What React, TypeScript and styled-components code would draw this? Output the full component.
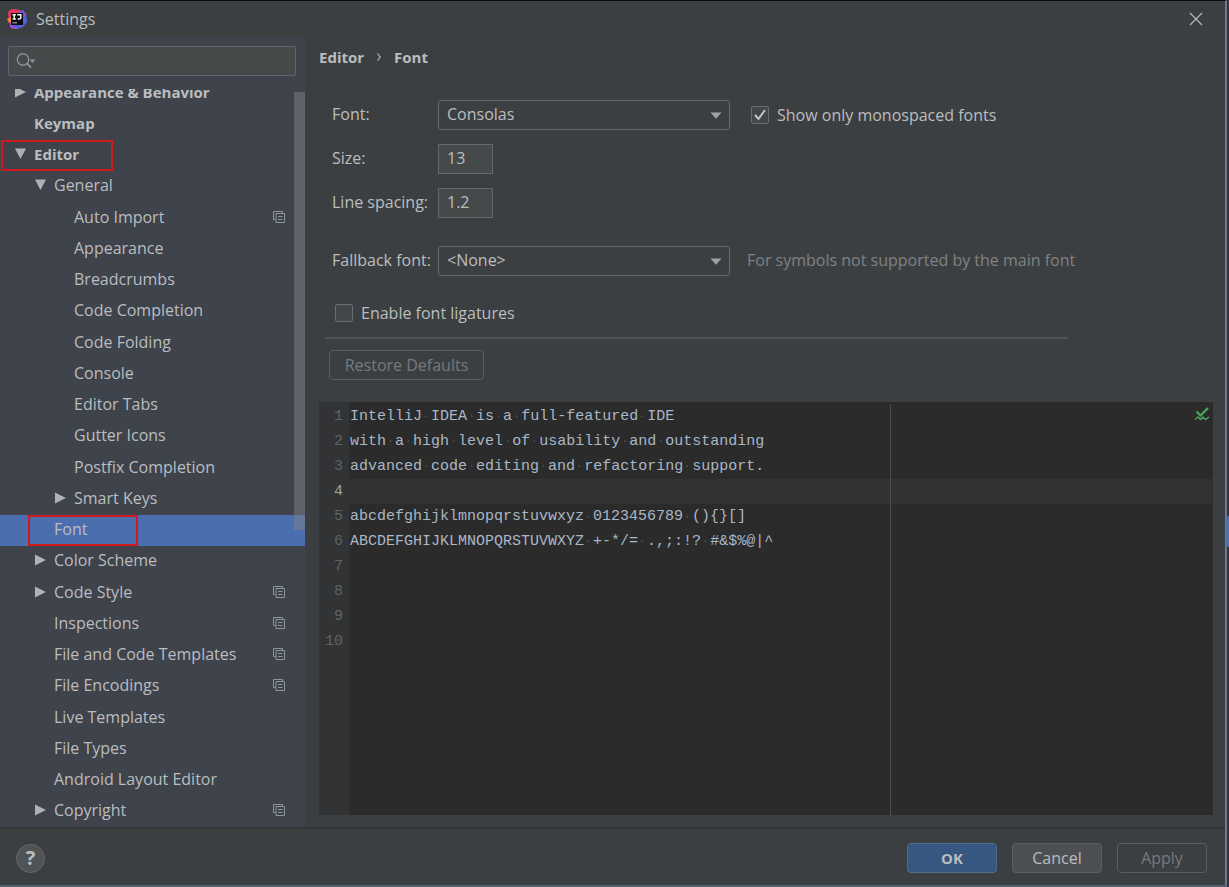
import React from "react";
import styled, { createGlobalStyle, css } from "styled-components";

const GlobalStyle = createGlobalStyle`
  * { box-sizing: border-box; }
  body {
    margin: 0;
    background: #2f3345;
    color: #bbbdbf;
    font-family: "Open Sans", "Noto Sans", sans-serif;
    font-size: 16px;
    line-height: 20px;
  }
  button, input, select { font: inherit; color: inherit; margin: 0; }
`;

const Desktop = styled.div`
  position: relative;
  min-height: 100vh;
  display: flex;
  padding-right: 2px;
`;

const BackgroundSelection = styled.div`
  position: absolute;
  right: 0;
  top: 516px;
  width: 3px;
  height: 31px;
  background: #4b6eaf;
`;

const Dialog = styled.div`
  flex: 1;
  min-width: 0;
  display: flex;
  flex-direction: column;
  background: #3c3f41;
  border-top: 1px solid #0c0d0e;
  border-right: 2px solid #747987;
  border-bottom: 2px solid #56616d;
`;

const TitleBar = styled.header`
  display: flex;
  align-items: center;
  height: 36px;
  padding: 0 22px 0 7px;
  gap: 9px;
`;

const Title = styled.h1`
  flex: 1;
  margin: 0;
  font-size: 16px;
  font-weight: 400;
`;

const IconButton = styled.button`
  display: flex;
  padding: 0;
  border: 0;
  background: none;
  color: #b4b6b8;
`;

const Body = styled.div`
  flex: 1;
  display: flex;
  min-height: 0;
`;

const Sidebar = styled.nav`
  flex: 0 0 305px;
  display: flex;
  flex-direction: column;
  background: #3e434c;
`;

const SearchBox = styled.label`
  display: flex;
  align-items: center;
  height: 30px;
  margin: 9px 9px 13px 8px;
  padding-left: 7px;
  background: #45494a;
  border: 1px solid #606468;
  border-radius: 2px;
  color: #8d9194;
`;

const SearchInput = styled.input`
  flex: 1;
  min-width: 0;
  border: 0;
  outline: 0;
  background: transparent;
`;

const TreeViewport = styled.div`
  position: relative;
  flex: 1;
  display: flex;
  overflow: hidden;
`;

const Tree = styled.ul`
  flex: 1;
  display: flex;
  flex-direction: column;
  margin: -12px 0 0;
  padding: 0;
  list-style: none;
`;

const TreeRow = styled.li<{ $level: number; $bold?: boolean; $selected?: boolean }>`
  position: relative;
  flex: 1 0 31px;
  display: flex;
  align-items: center;
  padding-left: ${(p) => 14 + p.$level * 20}px;
  padding-right: 20px;
  padding-bottom: 2px;
  font-size: ${(p) => (p.$bold ? 15 : 16)}px;
  font-weight: ${(p) => (p.$bold ? 700 : 400)};
  background: ${(p) => (p.$selected ? "#4b6eaf" : "transparent")};
`;

const TreeArrow = styled.span`
  flex: 0 0 20px;
  display: flex;
  color: #afb1b3;
`;

const TreeLabel = styled.span`
  flex: 1;
  white-space: nowrap;
`;

const Highlight = styled.span<{ $left: number; $width: number }>`
  position: absolute;
  left: ${(p) => p.$left}px;
  width: ${(p) => p.$width}px;
  top: 0;
  bottom: 0;
  border: 2px solid #cf1a20;
`;

const ScrollThumb = styled.div`
  position: absolute;
  top: 3px;
  right: 0;
  width: 11px;
  height: 438px;
  background: rgba(128, 130, 132, 0.5);
`;

const Main = styled.main`
  flex: 1;
  min-width: 0;
  display: flex;
  flex-direction: column;
  padding: 0 12px 12px 14px;
`;

const Breadcrumbs = styled.div`
  display: flex;
  align-items: center;
  gap: 13px;
  height: 42px;
  padding-bottom: 2px;
  font-size: 15px;
  font-weight: 700;
`;

const Form = styled.form`
  display: flex;
  flex-direction: column;
  gap: 14px;
  max-width: 749px;
  padding-top: 21px;
`;

const FormRow = styled.div<{ $before?: number }>`
  display: grid;
  grid-template-columns: 106px 292px 1fr;
  align-items: center;
  height: 30px;
  margin-left: 13px;
  margin-top: ${(p) => p.$before ?? 0}px;
  white-space: nowrap;
`;

const FieldLabel = styled.label`
  padding-bottom: 2px;
`;

const SelectWrap = styled.div`
  display: grid;
  align-items: center;
  > * { grid-area: 1 / 1; }
  > svg { justify-self: end; margin-right: 8px; pointer-events: none; }
`;

const Select = styled.select`
  appearance: none;
  width: 100%;
  height: 30px;
  padding: 0 8px 2px;
  border: 1px solid #676a6c;
  border-radius: 3px;
  background: #3c3f41;
`;

const NumberInput = styled.input`
  width: 55px;
  height: 30px;
  padding: 0 8px 2px;
  border: 1px solid #65686a;
  background: #45494a;
`;

const CheckLabel = styled.label<{ $inset: number }>`
  display: flex;
  align-items: center;
  gap: 8px;
  height: 26px;
  margin-left: ${(p) => p.$inset}px;
`;

const CheckBox = styled.span`
  display: grid;
  > * { grid-area: 1 / 1; }
  > svg { pointer-events: none; visibility: hidden; }
  > input:checked + svg { visibility: visible; }
`;

const CheckInput = styled.input`
  appearance: none;
  width: 18px;
  height: 18px;
  border: 1px solid #6b6e70;
  border-radius: 2px;
  background: #43474a;
`;

const Hint = styled.span`
  margin-left: 17px;
  padding-bottom: 2px;
  color: #7f8284;
`;

const Separator = styled.hr`
  width: calc(100% - 6px);
  height: 2px;
  margin: -5px 0 -3px 6px;
  border: 0;
  background: #515457;
`;

const buttonKinds = {
  primary: css`
    background: #365880;
    border-color: #4c708c;
    font-size: 15px;
    font-weight: 700;
  `,
  normal: css`
    background: #4c5052;
    border-color: #5e6163;
  `,
  disabled: css`
    background: transparent;
    border-color: #5a5d5f;
    color: #777a7c;
  `,
};

const Button = styled.button<{ $kind: keyof typeof buttonKinds; $width: number }>`
  width: ${(p) => p.$width}px;
  height: 30px;
  padding: 0;
  border: 1px solid;
  border-radius: 4px;
  ${(p) => buttonKinds[p.$kind]}
`;

const RestoreRow = styled.div`
  margin-left: 10px;
`;

const Editor = styled.section`
  position: relative;
  flex: 1;
  display: grid;
  grid-template-columns: 30px 1fr;
  margin-top: 22px;
  padding-top: 2px;
  background: linear-gradient(to right, #313335 30px, #2b2b2b 30px);
  font-family: "Liberation Mono", monospace;
  font-size: 15px;
  line-height: 25px;
`;

const Gutter = styled.div`
  text-align: right;
  padding-right: 6px;
`;

const LineNumber = styled.div<{ $current: boolean }>`
  color: ${(p) => (p.$current ? "#a4a3a3" : "#606366")};
`;

const Code = styled.div`
  color: #a9b7c6;
`;

const CodeLine = styled.div<{ $current: boolean }>`
  height: 25px;
  padding-left: 1px;
  white-space: pre;
  background: ${(p) => (p.$current ? "#323232" : "transparent")};
`;

const Space = styled.span`
  background: radial-gradient(circle, #484b4d 1px, transparent 1px);
`;

const MarginGuide = styled.div`
  position: absolute;
  top: 2px;
  bottom: 0;
  left: 571px;
  width: 1px;
  background: #4d4d4d;
`;

const Status = styled.div`
  position: absolute;
  top: 4px;
  right: 3px;
  display: flex;
`;

const Footer = styled.footer`
  display: flex;
  align-items: center;
  gap: 15px;
  height: 58px;
  padding: 2px 18px 0 16px;
  border-top: 2px solid #333638;
`;

const HelpButton = styled.button`
  width: 29px;
  height: 29px;
  margin-right: auto;
  padding: 0;
  border: 1px solid #65686a;
  border-radius: 50%;
  background: #4f5355;
  font-size: 20px;
  font-weight: 700;
`;

const Logo = () => (
  <svg width="20" height="20" viewBox="0 0 20 20" aria-hidden="true">
    <path d="M12 2l4-1 3 4 1 8-4 5-6 2-5-3z" fill="#4a63dd" />
    <path d="M16 1l3 4v5l-5-6z" fill="#8a4fd0" />
    <path d="M1 4q1-4 6-4l6 1v3L4 16l-2-4z" fill="#e8365f" />
    <path d="M0 10l4-2v5l-2 1z" fill="#f0823a" />
    <path d="M3 13l3 4 5 3q-7 0-8-2z" fill="#b04ad0" />
    <rect x="4" y="4" width="12" height="12" fill="#0b0b10" />
    <path d="M5.500 5.700h3.400M7.200 5.700v4.300M5.500 10h3.400M10.200 5.700h3.600v3q0 1.400-1.700 1.400h-1.400" fill="none" stroke="#f4f4f4" strokeWidth="1.500" />
    <path d="M5.500 13.800h4.500" stroke="#b9b9bd" strokeWidth="1.100" />
  </svg>
);

const Arrow = ({ open }: { open: boolean }) => (
  <svg width="13" height="12" viewBox="0 0 13 12" aria-hidden="true">
    <path d={open ? "M1 0.500h11L6.500 11z" : "M1 0.500v11l11-5.500z"} fill="currentColor" />
  </svg>
);

const ComboArrow = () => (
  <svg width="12" height="7" viewBox="0 0 12 7" aria-hidden="true">
    <path d="M0.500 0.500h11L6 6.800z" fill="#9fa2a5" />
  </svg>
);

const CopyIcon = () => (
  <svg width="12" height="12" viewBox="0 0 12 12" fill="none" stroke="#8f959c" aria-hidden="true">
    <path d="M9.500 2V.5h-9v8H2.500M3 2.500h8.500v9H3zM5 5.500h4.500M5 8.500h4.500" />
  </svg>
);

const SearchIcon = () => (
  <svg width="22" height="18" viewBox="0 0 22 18" fill="none" aria-hidden="true">
    <circle cx="7" cy="7.500" r="5.700" stroke="currentColor" strokeWidth="1.400" />
    <path d="M11 11.500l4 4" stroke="currentColor" strokeWidth="1.800" />
    <path d="M13.500 7.500h6L16.500 11z" fill="currentColor" />
  </svg>
);

const Tick = () => (
  <svg width="18" height="18" viewBox="0 0 18 18" fill="none" aria-hidden="true">
    <path d="M4 9l3.500 4L14 4" stroke="#c3c6c8" strokeWidth="2" />
  </svg>
);

const InspectionOk = () => (
  <svg width="16" height="16" viewBox="0 0 16 16" fill="none" stroke="#4aa05c" aria-hidden="true">
    <path d="M2.500 5.500l4 4L14 2" strokeWidth="2.400" />
    <path d="M1 13.500l3-2.500 2.500 2.500L9 11l2.500 2.500L15 11" strokeWidth="1.400" />
  </svg>
);

type Item = {
  label: string;
  level: number;
  open?: boolean;
  bold?: boolean;
  project?: boolean;
  selected?: boolean;
  mark?: [number, number];
};

const items: Item[] = [
  { label: "Appearance & Behavior", level: 0, open: false, bold: true },
  { label: "Keymap", level: 0, bold: true },
  { label: "Editor", level: 0, open: true, bold: true, mark: [1, 112] },
  { label: "General", level: 1, open: true },
  { label: "Auto Import", level: 2, project: true },
  { label: "Appearance", level: 2 },
  { label: "Breadcrumbs", level: 2 },
  { label: "Code Completion", level: 2 },
  { label: "Code Folding", level: 2 },
  { label: "Console", level: 2 },
  { label: "Editor Tabs", level: 2 },
  { label: "Gutter Icons", level: 2 },
  { label: "Postfix Completion", level: 2 },
  { label: "Smart Keys", level: 2, open: false },
  { label: "Font", level: 1, selected: true, mark: [28, 110] },
  { label: "Color Scheme", level: 1, open: false },
  { label: "Code Style", level: 1, open: false, project: true },
  { label: "Inspections", level: 1, project: true },
  { label: "File and Code Templates", level: 1, project: true },
  { label: "File Encodings", level: 1, project: true },
  { label: "Live Templates", level: 1 },
  { label: "File Types", level: 1 },
  { label: "Android Layout Editor", level: 1 },
  { label: "Copyright", level: 1, open: false, project: true },
];

const lines = [
  "IntelliJ IDEA is a full-featured IDE",
  "with a high level of usability and outstanding",
  "advanced code editing and refactoring support.",
  "",
  "abcdefghijklmnopqrstuvwxyz 0123456789 (){}[]",
  "ABCDEFGHIJKLMNOPQRSTUVWXYZ +-*/= .,;:!? #&$%@|^",
  "",
  "",
  "",
  "",
];
const currentLine = 3;

export default function App() {
  return (
    <>
      <GlobalStyle />
      <Desktop>
        <Dialog>
          <TitleBar>
            <Logo />
            <Title>Settings</Title>
            <IconButton aria-label="Close">
              <svg width="14" height="14" viewBox="0 0 14 14" fill="none" stroke="currentColor" strokeWidth="1.300">
                <path d="M1 1l12 12M13 1L1 13" />
              </svg>
            </IconButton>
          </TitleBar>
          <Body>
            <Sidebar>
              <SearchBox>
                <SearchIcon />
                <SearchInput type="text" aria-label="Search settings" />
              </SearchBox>
              <TreeViewport>
                <Tree>
                  {items.map((item) => (
                    <TreeRow key={item.label} $level={item.level} $bold={item.bold} $selected={item.selected}>
                      <TreeArrow>{item.open !== undefined && <Arrow open={item.open} />}</TreeArrow>
                      <TreeLabel>{item.label}</TreeLabel>
                      {item.project && <CopyIcon />}
                      {item.mark && <Highlight $left={item.mark[0]} $width={item.mark[1]} />}
                    </TreeRow>
                  ))}
                </Tree>
                <ScrollThumb />
              </TreeViewport>
            </Sidebar>
            <Main>
              <Breadcrumbs>
                <span>Editor</span>
                <svg width="4" height="8" viewBox="0 0 4 8" fill="none" stroke="#bbbdbf" strokeWidth="1.200" aria-hidden="true">
                  <path d="M0.500 0.500L3.200 4 0.500 7.500" />
                </svg>
                <span>Font</span>
              </Breadcrumbs>
              <Form>
                <FormRow>
                  <FieldLabel htmlFor="font">Font:</FieldLabel>
                  <SelectWrap>
                    <Select id="font">
                      <option>Consolas</option>
                    </Select>
                    <ComboArrow />
                  </SelectWrap>
                  <CheckLabel $inset={21}>
                    <CheckBox>
                      <CheckInput type="checkbox" defaultChecked />
                      <Tick />
                    </CheckBox>
                    Show only monospaced fonts
                  </CheckLabel>
                </FormRow>
                <FormRow>
                  <FieldLabel htmlFor="size">Size:</FieldLabel>
                  <NumberInput id="size" type="text" defaultValue="13" />
                </FormRow>
                <FormRow>
                  <FieldLabel htmlFor="spacing">Line spacing:</FieldLabel>
                  <NumberInput id="spacing" type="text" defaultValue="1.2" />
                </FormRow>
                <FormRow $before={14}>
                  <FieldLabel htmlFor="fallback">Fallback font:</FieldLabel>
                  <SelectWrap>
                    <Select id="fallback">
                      <option>&lt;None&gt;</option>
                    </Select>
                    <ComboArrow />
                  </SelectWrap>
                  <Hint>For symbols not supported by the main font</Hint>
                </FormRow>
                <FormRow $before={8}>
                  <CheckLabel $inset={3}>
                    <CheckBox>
                      <CheckInput type="checkbox" />
                      <Tick />
                    </CheckBox>
                    Enable font ligatures
                  </CheckLabel>
                </FormRow>
                <Separator />
                <RestoreRow>
                  <Button type="button" disabled $kind="disabled" $width={155}>
                    Restore Defaults
                  </Button>
                </RestoreRow>
              </Form>
              <Editor aria-label="Font preview">
                <Gutter>
                  {lines.map((_, i) => (
                    <LineNumber key={i} $current={i === currentLine}>
                      {i + 1}
                    </LineNumber>
                  ))}
                </Gutter>
                <Code>
                  {lines.map((line, i) => (
                    <CodeLine key={i} $current={i === currentLine}>
                      {line.split(" ").map((word, j) => (
                        <React.Fragment key={j}>
                          {j > 0 && <Space> </Space>}
                          {word}
                        </React.Fragment>
                      ))}
                    </CodeLine>
                  ))}
                </Code>
                <MarginGuide />
                <Status>
                  <InspectionOk />
                </Status>
              </Editor>
            </Main>
          </Body>
          <Footer>
            <HelpButton aria-label="Help">?</HelpButton>
            <Button $kind="primary" $width={90}>OK</Button>
            <Button $kind="normal" $width={90}>Cancel</Button>
            <Button $kind="disabled" $width={90} disabled>Apply</Button>
          </Footer>
        </Dialog>
        <BackgroundSelection />
      </Desktop>
    </>
  );
}
